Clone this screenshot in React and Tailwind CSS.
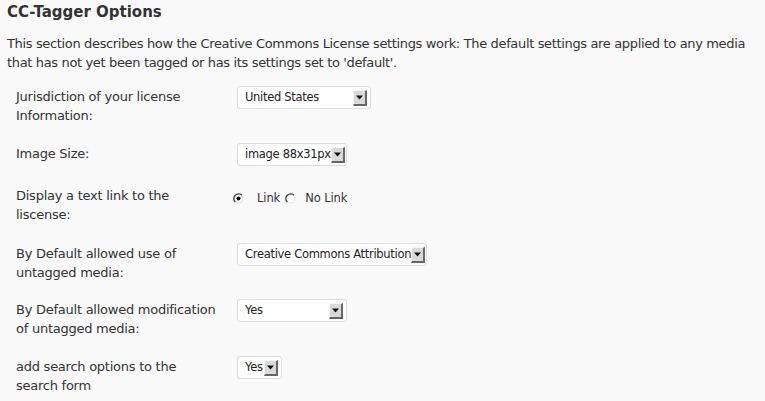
import React from 'react';

const font = { fontFamily: '"DejaVu Sans", "Lucida Grande", Verdana, sans-serif' };

const ArrowBox = () => (
    <span className="flex h-[16px] w-[14px] shrink-0 items-center justify-center border-t border-l border-t-[#f4f4f4] border-l-[#f4f4f4] border-r-2 border-b-2 border-r-[#666] border-b-[#666] bg-[#d9d9d9]">
        <svg width="7" height="5" viewBox="0 0 7 5">
            <path d="M0 0.5h7L3.5 4.5z" fill="#111" />
        </svg>
    </span>
);

const FakeSelect = ({ value, width }) => (
    <div className={`flex h-[23px] items-center justify-between rounded-[3px] border border-[#dcdcdc] bg-white pl-[7px] pr-[3px] text-[11.5px] tracking-[-0.3px] text-[#222] ${width}`}>
        <span className="whitespace-nowrap">{value}</span>
        <ArrowBox />
    </div>
);

const Radio = ({ checked }) => (
    <svg width="11" height="11" viewBox="0 0 11 11">
        <circle cx="5.5" cy="5.5" r="4.5" fill="#fff" stroke="#e2e2e2" strokeWidth="1" />
        <path d="M9 2.3A4.6 4.6 0 0 0 2.3 9" fill="none" stroke="#444" strokeWidth="1.5" />
        {checked && <circle cx="5.5" cy="5.5" r="2" fill="#000" />}
    </svg>
);

const rows = [
    { label: ['Jurisdiction of your license', 'Information:'], h: 'h-[57px]', field: <FakeSelect value="United States" width="w-[134px]" /> },
    { label: ['Image Size:'], h: 'h-[42px]', field: <FakeSelect value="image 88x31px" width="w-[110px]" /> },
    {
        label: ['Display a text link to the', 'liscense:'],
        h: 'h-[58px]',
        field: (
            <div className="-ml-[4px] flex items-center pt-[5px] text-[11.5px] tracking-[-0.1px] text-[#333]">
                <Radio checked />
                <span className="ml-[13px]">Link</span>
                <span className="ml-[5px] flex"><Radio /></span>
                <span className="ml-[9px]">No Link</span>
            </div>
        ),
    },
    { label: ['By Default allowed use of', 'untagged media:'], h: 'h-[56px]', field: <FakeSelect value="Creative Commons Attribution" width="w-[190px]" /> },
    { label: ['By Default allowed modification', 'of untagged media:'], h: 'h-[57px]', field: <FakeSelect value="Yes" width="w-[110px]" /> },
    { label: ['add search options to the', 'search form'], h: 'h-[45px]', field: <FakeSelect value="Yes" width="w-[45px]" /> },
];

const App = () => {
    return (
        <div className="h-[401px] w-[765px] overflow-hidden bg-[#f9f9f9] px-[7px] text-[#333]" style={font}>
            <h2 className="pt-[2px] text-[15px] font-bold leading-[20px] text-[#333]">CC-Tagger Options</h2>
            <p className="mt-[12px] whitespace-nowrap text-[13px] leading-[19px] tracking-[-0.35px]">
                This section describes how the Creative Commons License settings work: The default settings are applied to any media
                <br />
                that has not yet been tagged or has its settings set to 'default'.
            </p>
            <div className="mt-[14px] flex flex-col">
                {rows.map((row, i) => (
                    <div key={i} className={`flex items-start ${row.h}`}>
                        <div className="w-[230px] pl-[9px] pt-[1px] text-[13px] leading-[19px] tracking-[-0.25px] whitespace-nowrap">
                            {row.label.map((l, j) => (
                                <div key={j}>{l}</div>
                            ))}
                        </div>
                        <div>{row.field}</div>
                    </div>
                ))}
            </div>
        </div>
    );
};

export default App;
